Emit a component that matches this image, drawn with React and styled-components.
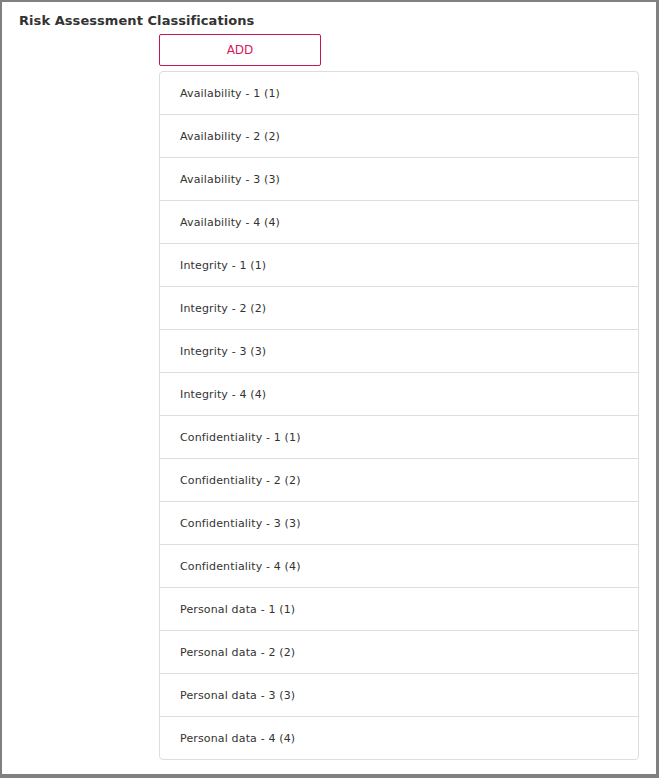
import React from 'react';
import styled, {createGlobalStyle} from 'styled-components';

const GlobalStyle = createGlobalStyle`
    html, body{
        margin: 0;
        padding: 0;
        background: #ffffff;
    }
    *{
        box-sizing: border-box;
    }
`;

const items = [
    'Availability - 1 (1)',
    'Availability - 2 (2)',
    'Availability - 3 (3)',
    'Availability - 4 (4)',
    'Integrity - 1 (1)',
    'Integrity - 2 (2)',
    'Integrity - 3 (3)',
    'Integrity - 4 (4)',
    'Confidentiality - 1 (1)',
    'Confidentiality - 2 (2)',
    'Confidentiality - 3 (3)',
    'Confidentiality - 4 (4)',
    'Personal data - 1 (1)',
    'Personal data - 2 (2)',
    'Personal data - 3 (3)',
    'Personal data - 4 (4)',
];

const App = () => {
    return(
        <>
            <GlobalStyle/>
            <Frame>
                <Title>Risk Assessment Classifications</Title>
                <Content>
                    <AddButton type="button">ADD</AddButton>
                    <List>
                        {items.map((item) => (
                            <Row key={item}>{item}</Row>
                        ))}
                    </List>
                </Content>
            </Frame>
        </>
    )
};

const Frame = styled.div`
    width: 659px;
    height: 778px;
    border-style: solid;
    border-color: #808080;
    border-width: 2px 3px 4px 2px;
    background: #fff;
    font-family: "DejaVu Sans", Verdana, sans-serif;
    color: #333;
    padding: 11px 0 0 17px;
`;

const Title = styled.h1`
    margin: 0;
    font-size: 13px;
    font-weight: bold;
    line-height: 16px;
    letter-spacing: 0.06px;
    color: #333;
`;

const Content = styled.div`
    display: flex;
    flex-direction: column;
    align-items: flex-start;
    margin: 5px 0 0 140px;
    gap: 5px;
`;

const AddButton = styled.button`
    width: 162px;
    height: 32px;
    background: #fff;
    border: 1px solid #c2185b;
    border-radius: 2px;
    color: #d81b60;
    font-family: inherit;
    font-size: 12px;
    cursor: pointer;
`;

const List = styled.div`
    width: 480px;
    border: 1px solid #dddddd;
    border-radius: 4px;
    display: flex;
    flex-direction: column;
`;

const Row = styled.div`
    height: 43px;
    display: flex;
    align-items: center;
    padding-left: 20px;
    font-size: 11px;
    letter-spacing: 0.15px;
    color: #333;
    border-top: 1px solid #dddddd;
    &:first-child{
        border-top: none;
        height: 42px;
    }
`;

export default App;
